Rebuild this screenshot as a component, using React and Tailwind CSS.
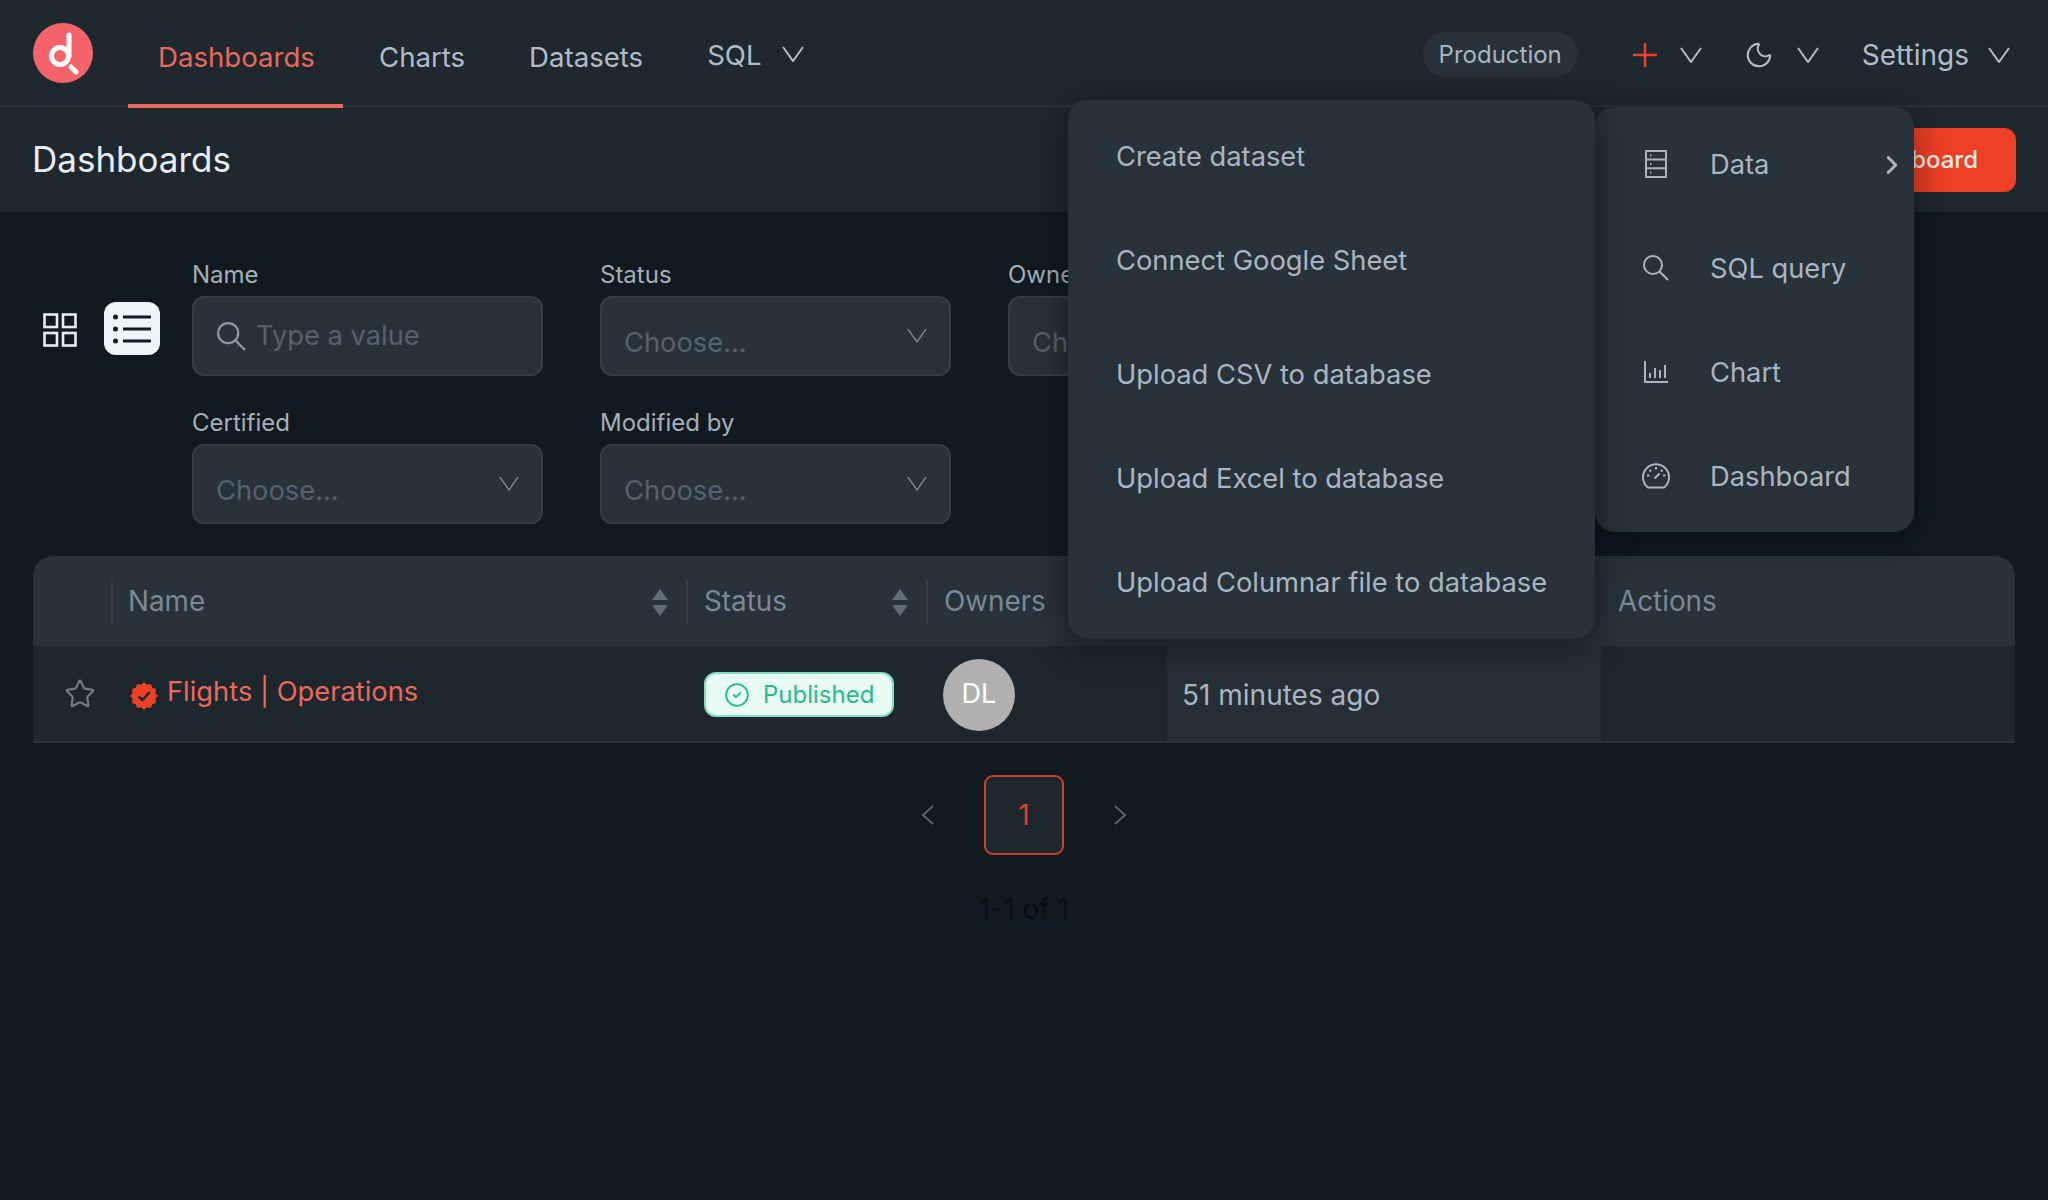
import {Star, CircleCheck, Moon, ChevronRight} from 'lucide-react';

const V = ({className, width = 2}) => (
  <svg viewBox="0 0 22 16" fill="none" stroke="currentColor" strokeWidth={width} className={className}>
    <path d="M1 1l10 14L21 1" />
  </svg>
);

const Logo = () => (
  <svg viewBox="0 0 60 60" className="w-[60px] h-[60px] shrink-0">
    <circle cx="30" cy="30" r="30" fill="#f2646a" />
    <circle cx="27" cy="33" r="8.5" fill="none" stroke="#fff" strokeWidth="5" />
    <path d="M36 12v21" stroke="#fff" strokeWidth="5" strokeLinecap="round" />
    <path d="M38 44l5 5" stroke="#fff" strokeWidth="5" strokeLinecap="round" />
  </svg>
);

const GridIcon = () => (
  <svg viewBox="0 0 34 34" fill="none" stroke="#e8edf2" strokeWidth="2.6" className="w-[34px] h-[34px]">
    <rect x="1.5" y="1.5" width="12.5" height="12.5" />
    <rect x="20" y="1.5" width="12.5" height="12.5" />
    <rect x="1.5" y="20" width="12.5" height="12.5" />
    <rect x="20" y="20" width="12.5" height="12.5" />
  </svg>
);

const ListIcon = () => (
  <svg viewBox="0 0 38 32" className="w-[38px] h-[32px]" fill="#141c23">
    <circle cx="2.5" cy="4" r="2.5" />
    <circle cx="2.5" cy="16" r="2.5" />
    <circle cx="2.5" cy="28" r="2.5" />
    <rect x="10" y="2.5" width="28" height="3" />
    <rect x="10" y="14.5" width="28" height="3" />
    <rect x="10" y="26.5" width="28" height="3" />
  </svg>
);

const SearchIcon = ({className, color}) => (
  <svg viewBox="0 0 26 26" fill="none" stroke={color} strokeWidth="2" className={className}>
    <circle cx="10" cy="10" r="9" />
    <path d="M16.500 16.500L25 25" />
  </svg>
);

const DataIcon = () => (
  <svg viewBox="0 0 22 28" fill="none" stroke="#a9b6c1" strokeWidth="2" className="w-[22px] h-[28px]">
    <rect x="1" y="1" width="20" height="26" />
    <path d="M1 9.6h20M1 18.3h20" />
    <path d="M5 5.3h1.5M5 14h1.5M5 22.6h1.5" />
  </svg>
);

const ChartIcon = () => (
  <svg viewBox="0 0 24 22" fill="none" stroke="#a9b6c1" strokeWidth="2" className="w-[24px] h-[22px]">
    <path d="M1 0v21h23" />
    <path d="M6 17v-5M11 17V7M16 17v-8M21 17V4" />
  </svg>
);

const GaugeIcon = () => (
  <svg viewBox="0 0 28 26" fill="none" stroke="#a9b6c1" strokeWidth="2" className="w-[28px] h-[26px]">
    <path d="M6 24.5A13 13 0 1 1 22 24.5Z" strokeLinejoin="round" />
    <path d="M14 4v2.5M5 12.5h2.500M21 12.5h2.500M7.500 7l1.500 1.500M20.500 7L19 8.500M12.500 15.500l5-5" />
  </svg>
);

const SortIcon = () => (
  <svg viewBox="0 0 18 27" fill="#5f6c78" className="w-[18px] h-[27px]">
    <path d="M9 0l8 11H1zM9 27L1 16h16z" />
  </svg>
);

const PageArrow = ({d}) => (
  <svg viewBox="0 0 13 20" fill="none" stroke="#56626d" strokeWidth="2" className="w-[13px] h-[20px]">
    <path d={d} />
  </svg>
);

function badgePoints() {
  const points = [];
  for (let i = 0; i < 24; i++) {
    const r = i % 2 === 0 ? 14 : 11.6;
    const a = (i / 24) * Math.PI * 2;
    points.push(`${14 + r * Math.sin(a)},${14 - r * Math.cos(a)}`);
  }
  return points.join(' ');
}

const VerifiedBadge = () => (
  <svg viewBox="0 0 28 28" className="w-[28px] h-[28px] shrink-0">
    <polygon points={badgePoints()} fill="#ee4027" />
    <path d="M8.500 14.500l4 3.500 7-8" fill="none" stroke="#1e262e" strokeWidth="2.600" />
  </svg>
);

const Filter = ({label, children}) => (
  <div className="w-[351px]">
    <div className="h-[32px] mb-[5px] text-[24px] leading-[32px] text-[#a3afba]">{label}</div>
    {children}
  </div>
);

const Choose = () => (
  <div className="h-[80px] rounded-[12px] bg-[#28323a] border-2 border-[#343e47] pl-[22px] pr-[22px] flex justify-between">
    <span className="text-[27.3px] leading-[36px] mt-[27px] text-[#56626d]">Choose...</span>
    <V width={1.5} className="w-[20px] h-[15px] mt-[30px] text-[#7f8c98]" />
  </div>
);

const NavLink = ({className, children}) => (
  <a className={`text-[27.6px] leading-[36px] text-[#b1bcc8] ${className}`}>{children}</a>
);

const TH = ({className, children, sort}) => (
  <div className={`flex items-center justify-between pr-[17px] pt-[2px] h-[45px] my-auto text-[27.8px] text-[#7a8896] ${className}`}>
    <span>{children}</span>
    {sort && <SortIcon />}
  </div>
);

function CreateMenu() {
  const items = [
    ['Create dataset', 'mt-[39px]'],
    ['Connect Google Sheet', 'mt-[68px]'],
    ['Upload CSV to database', 'mt-[78px]'],
    ['Upload Excel to database', 'mt-[68px]'],
    ['Upload Columnar file to database', 'mt-[68px]'],
  ];
  return (
    <div className="absolute left-[1068px] top-[100px] w-[527px] h-[538px] z-20 rounded-[20px] bg-[#28323a] pl-[48px] shadow-[0_8px_36px_rgba(0,0,0,0.45)]">
      {items.map(([label, margin]) => (
        <div key={label} className={`text-[27.3px] leading-[36px] text-[#a9b6c1] ${margin}`}>{label}</div>
      ))}
    </div>
  );
}

function AddMenu() {
  const items = [
    ['Data', <DataIcon />],
    ['SQL query', <SearchIcon className="w-[26px] h-[26px]" color="#a9b6c1" />],
    ['Chart', <ChartIcon />],
    ['Dashboard', <GaugeIcon />],
  ];
  return (
    <div className="absolute left-[1595px] top-[107px] w-[319px] h-[425px] z-10 rounded-[20px] bg-[#28323a] pt-[5px] shadow-[0_8px_36px_rgba(0,0,0,0.45)]">
      {items.map(([label, icon]) => (
        <div key={label} className="h-[104px] flex items-center relative text-[27.3px] text-[#a9b6c1]">
          <span className="w-[122px] flex justify-center shrink-0">{icon}</span>
          <span className="-ml-[7px] mt-[3px]">{label}</span>
          {label === 'Data' && <ChevronRight size={30} strokeWidth={2.4} className="absolute left-[282px] top-[38px]" />}
        </div>
      ))}
    </div>
  );
}

export default function App() {
  return (
    <div className="relative min-h-screen bg-[#121a20] font-['Inter',sans-serif] overflow-hidden">
      <nav className="h-[107px] bg-[#1f272f] border-b-2 border-[#2a323a] flex items-start pl-[33px] pr-[38px]">
        <div className="mt-[23px]"><Logo /></div>
        <a className="relative ml-[35px] h-[108px] w-[215px] border-b-4 border-[#e96a5b] flex justify-center pl-[2px] pt-[39px] text-[27.6px] leading-[36px] text-[#e96a5b]">Dashboards</a>
        <NavLink className="ml-[36px] mt-[39px]">Charts</NavLink>
        <NavLink className="ml-[64px] mt-[39px]">Datasets</NavLink>
        <NavLink className="ml-[64px] mt-[37px]">SQL</NavLink>
        <V className="ml-[20px] mt-[46px] w-[22px] h-[16px] text-[#b1bcc8]" />
        <div className="ml-auto flex items-center h-[109px]">
          <span className="h-[45px] px-[16px] rounded-full bg-[#28323a] flex items-center text-[24px] text-[#a9b6c1]">Production</span>
          <svg viewBox="0 0 24 24" stroke="#ee4027" strokeWidth="2.500" className="w-[24px] h-[24px] ml-[55px]"><path d="M12 0v24M0 12h24" /></svg>
          <V className="ml-[23px] w-[22px] h-[16px] text-[#b1bcc8]" />
          <Moon size={30} strokeWidth={1.6} color="#b1bcc8" className="ml-[42px]" />
          <V className="ml-[23px] w-[22px] h-[16px] text-[#b1bcc8]" />
          <span className="ml-[43px] mt-[1px] text-[28px] text-[#b1bcc8]">Settings</span>
          <V className="ml-[19px] w-[22px] h-[16px] text-[#b1bcc8]" />
        </div>
      </nav>

      <header className="h-[105px] bg-[#1f272f] flex items-center justify-between pl-[32px] pr-[32px]">
        <h1 className="text-[35px] text-[#e8edf2]">Dashboards</h1>
        <button className="h-[64px] w-[200px] rounded-[12px] bg-[#ee4027] text-[24px] text-[#f4ece9] font-medium text-right pr-[38px]">Dashboard</button>
      </header>

      <section className="flex pl-[33px] pt-[47px]">
        <div className="flex items-start shrink-0 w-[159px] pt-[43px]">
          <div className="ml-[10px] mt-[11px]"><GridIcon /></div>
          <div className="ml-[27px] w-[56px] h-[53px] rounded-[12px] bg-[#f0f3f7] flex items-center justify-center"><ListIcon /></div>
        </div>
        <div className="flex flex-col gap-[31px]">
          <div className="flex gap-[57px]">
            <Filter label="Name">
              <div className="h-[80px] rounded-[12px] bg-[#28323a] border-2 border-[#343e47] flex items-center pl-[23px]">
                <SearchIcon className="w-[29px] h-[29px]" color="#8b98a4" />
                <span className="ml-[10px] text-[27.3px] text-[#56626d]">Type a value</span>
              </div>
            </Filter>
            <Filter label="Status"><Choose /></Filter>
            <Filter label="Owners"><Choose /></Filter>
          </div>
          <div className="flex gap-[57px]">
            <Filter label="Certified"><Choose /></Filter>
            <Filter label="Modified by"><Choose /></Filter>
          </div>
        </div>
      </section>

      <section className="mx-[33px] mt-[32px]">
        <div className="grid grid-cols-[78px_575px_240px_241px_434px_415px] h-[90px] bg-[#28323a] rounded-t-[20px]">
          <div />
          <TH className="pl-[15px] border-l-2 border-[#343e47]" sort>Name</TH>
          <TH className="pl-[16px] border-l-2 border-[#343e47]" sort>Status</TH>
          <TH className="pl-[16px] border-l-2 border-[#343e47]">Owners</TH>
          <div />
          <TH className="pl-[17px]">Actions</TH>
        </div>
        <div className="grid grid-cols-[78px_575px_240px_241px_434px_415px] h-[97px] bg-[#1e262e] border-b-2 border-b-[#2a323a]">
          <div className="flex justify-end pr-[15px] pt-[32px]"><Star size={32} strokeWidth={1.6} color="#6f7d8a" /></div>
          <div className="flex items-center pl-[19px] pt-[2px] text-[27.3px] text-[#e96a5b]">
            <span className="mt-[2px]"><VerifiedBadge /></span>
            <span className="ml-[9px] -mt-[4px]">Flights | Operations</span>
          </div>
          <div className="flex items-center pl-[18px] pt-[2px]">
            <span className="h-[45px] w-[190px] rounded-[12px] bg-[#e8fbf4] border-2 border-[#7fe0bd] flex items-center pl-[18px] text-[24px] text-[#2cb88a]">
              <CircleCheck size={26} strokeWidth={1.7} />
              <span className="ml-[13px]">Published</span>
            </span>
          </div>
          <div className="flex items-center pl-[17px] pt-[2px]">
            <span className="w-[72px] h-[72px] rounded-full bg-[#b0b0b0] flex items-center justify-center text-[27px] text-white">DL</span>
          </div>
          <div className="flex items-center pl-[15px] pt-[2px] bg-[#262f37] text-[28px] text-[#a9b6c1]">51 minutes ago</div>
          <div />
        </div>
      </section>

      <div className="mt-[32px] flex items-center justify-center gap-[50px]">
        <PageArrow d="M12 1L2 10l10 9" />
        <span className="w-[80px] h-[80px] rounded-[9px] bg-[#1e262e] border-2 border-[#c9402f] flex items-center justify-center text-[28px] text-[#d8432f]">1</span>
        <PageArrow d="M1 1l10 9-10 9" />
      </div>
      <p className="mt-[36px] text-center text-[28px] leading-[36px] text-[#0b0d0f]">1-1 of 1</p>

      <AddMenu />
      <CreateMenu />
    </div>
  );
}
